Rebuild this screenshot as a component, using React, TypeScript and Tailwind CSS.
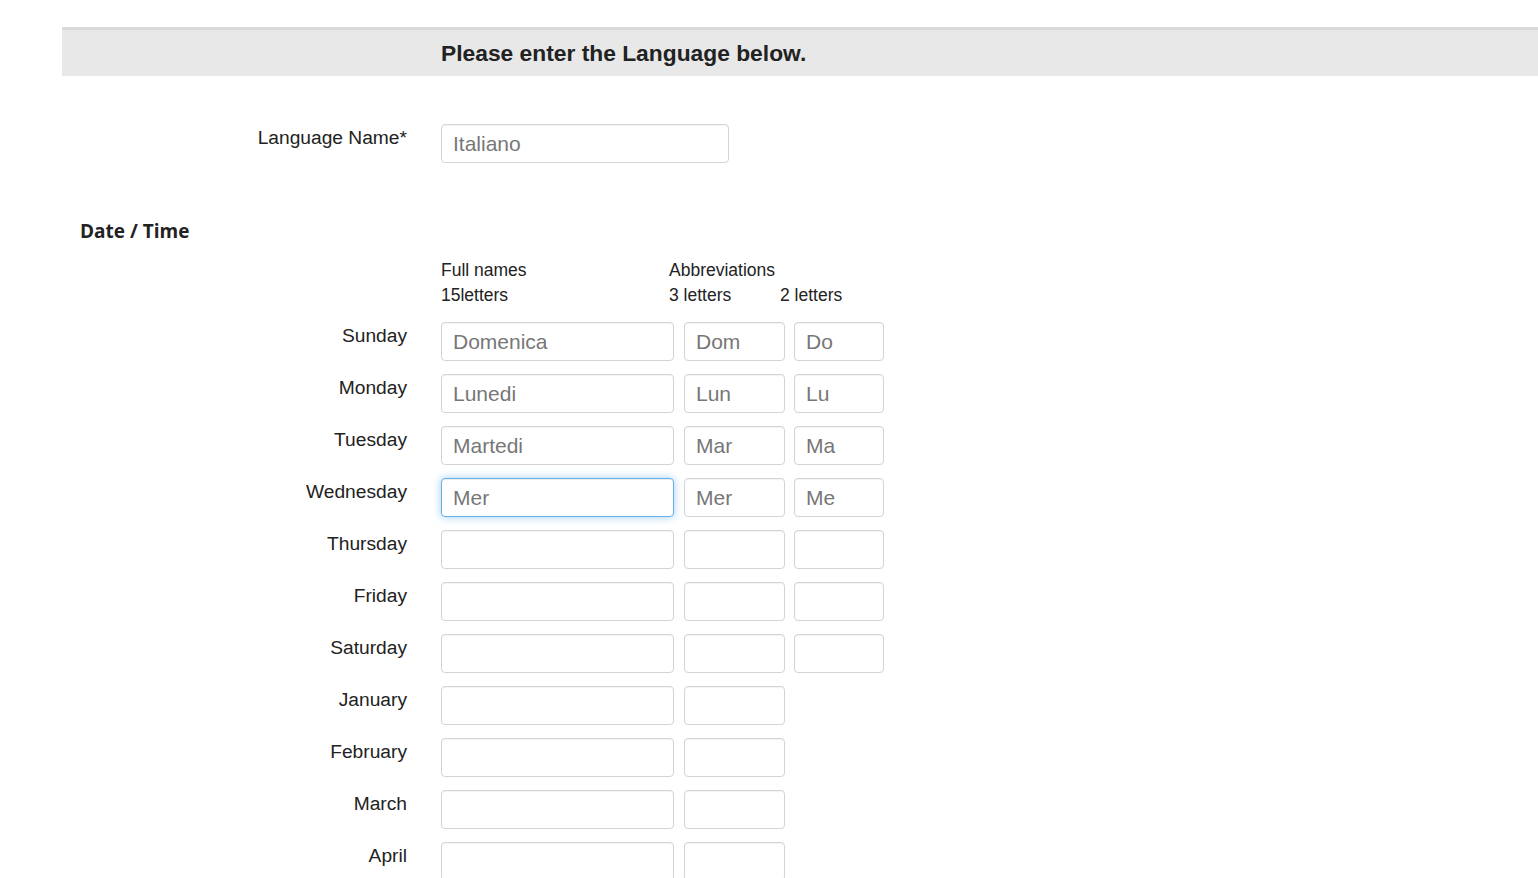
import React from "react";

const rows: { label: string; full: string; three: string; two?: string; hasTwo: boolean; focus?: boolean }[] = [
  { label: "Sunday", full: "Domenica", three: "Dom", two: "Do", hasTwo: true },
  { label: "Monday", full: "Lunedi", three: "Lun", two: "Lu", hasTwo: true },
  { label: "Tuesday", full: "Martedi", three: "Mar", two: "Ma", hasTwo: true },
  { label: "Wednesday", full: "Mer", three: "Mer", two: "Me", hasTwo: true, focus: true },
  { label: "Thursday", full: "", three: "", two: "", hasTwo: true },
  { label: "Friday", full: "", three: "", two: "", hasTwo: true },
  { label: "Saturday", full: "", three: "", two: "", hasTwo: true },
  { label: "January", full: "", three: "", hasTwo: false },
  { label: "February", full: "", three: "", hasTwo: false },
  { label: "March", full: "", three: "", hasTwo: false },
  { label: "April", full: "", three: "", hasTwo: false },
];

const inputBase =
  "h-[39px] rounded-[4px] border bg-white pl-[11px] text-[21px] text-[#777] outline-none font-['Liberation_Sans',Arial,sans-serif] flex items-center";

function Box({ value, w, focus }: { value: string; w: string; focus?: boolean }) {
  return (
    <div
      className={
        inputBase +
        " " +
        w +
        (focus
          ? " border-[#66afe9] shadow-[inset_0_1px_1px_rgba(0,0,0,0.075),0_0_8px_rgba(102,175,233,0.6)]"
          : " border-[#d4d4d4] shadow-[inset_0_1px_1px_rgba(0,0,0,0.05)]")
      }
    >
      {value}
    </div>
  );
}

export default function App() {
  return (
    <div className="w-[1538px] h-[878px] overflow-hidden bg-white text-[#333] font-['Liberation_Sans',Arial,sans-serif]">
      <div className="pt-[27px] pl-[62px]">
        <div className="h-[49px] border-t-[3px] border-[#dadada] bg-[#e8e8e8] flex items-center pl-[379px] pt-[1px]">
          <span className="text-[22.8px] font-bold text-[#222] leading-none">Please enter the Language below.</span>
        </div>
      </div>

      <div className="mt-[48px] flex">
        <div className="w-[407px] pt-[1px] text-right text-[19.2px] leading-[26px] text-[#222]">Language Name*</div>
        <div className="ml-[34px]">
          <Box value="Italiano" w="w-[288px]" />
        </div>
      </div>

      <div className="mt-[55px] pl-[80px] text-[19px] leading-[26px] font-bold text-[#222] font-['Open_Sans',sans-serif]">
        Date / Time
      </div>

      <div className="mt-[14px] flex pl-[441px] text-[17.5px] leading-[25px] text-[#222]">
        <div className="w-[228px]">
          <div>Full names</div>
          <div>15letters</div>
        </div>
        <div>
          <div>Abbreviations</div>
          <div className="flex">
            <div className="w-[111px]">3 letters</div>
            <div>2 letters</div>
          </div>
        </div>
      </div>

      <div className="mt-[14px] flex flex-col gap-[13px]">
        {rows.map((r) => (
          <div key={r.label} className="flex">
            <div className="w-[407px] pt-[1px] text-right text-[19.2px] leading-[26px] text-[#222]">{r.label}</div>
            <div className="ml-[34px] flex">
              <Box value={r.full} w="w-[233px]" focus={r.focus} />
              <div className="ml-[10px]">
                <Box value={r.three} w="w-[101px]" />
              </div>
              {r.hasTwo && (
                <div className="ml-[9px]">
                  <Box value={r.two ?? ""} w="w-[90px]" />
                </div>
              )}
            </div>
          </div>
        ))}
      </div>
    </div>
  );
}
